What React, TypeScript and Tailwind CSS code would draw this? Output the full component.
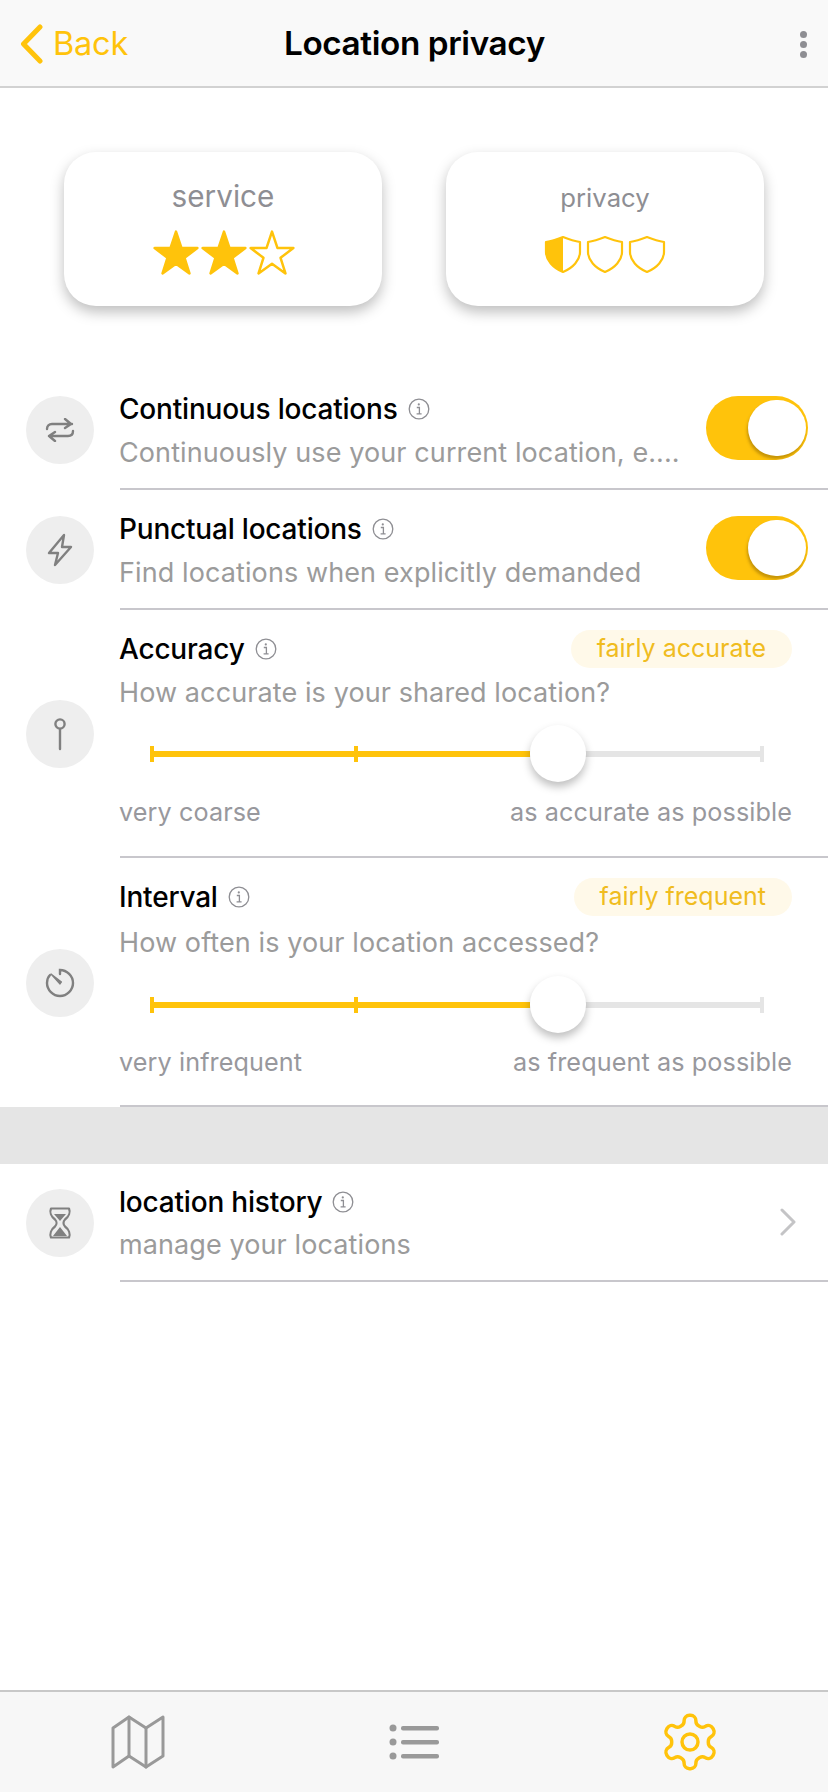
import React from 'react';

const font = "font-['Inter','Noto_Sans',sans-serif]";

const InfoIcon = () => (
    <svg width="22" height="22" viewBox="0 0 22 22" fill="none" stroke="#8e8e93" className="shrink-0">
        <circle cx="11" cy="11" r="9.8" strokeWidth="1.3" />
        <circle cx="10.8" cy="6.4" r="1.1" fill="#8e8e93" stroke="none" />
        <path d="M8.8 9.5h2.6v6.2M8.6 15.8h5" strokeWidth="1.3" />
    </svg>
);

const IconCircle = ({ children }: { children: React.ReactNode }) => (
    <div className="w-[68px] h-[68px] rounded-full bg-[#eeeeee] flex items-center justify-center shrink-0">
        {children}
    </div>
);

const Toggle = () => (
    <div className="w-[102px] h-[64px] rounded-full bg-[#ffc30b] flex items-center justify-end pr-[2px] overflow-hidden shrink-0">
        <div className="w-[58px] h-[56px] rounded-full bg-white shadow-[-1px_3px_3px_rgba(90,60,0,0.35)]"></div>
    </div>
);

const Title = ({ text }: { text: string }) => (
    <div className="flex items-center gap-[10px] h-[38px] -ml-[1px]">
        <span className="text-[28px] font-medium text-black tracking-[-0.2px]">{text}</span>
        <InfoIcon />
    </div>
);

const Subtitle = ({ text }: { text: string }) => (
    <div className="h-[38px] -ml-[1px] flex items-center text-[27px] text-[#9b9b9b] whitespace-nowrap tracking-[0.1px]">{text}</div>
);

const Star = ({ filled }: { filled: boolean }) => (
    <svg width="48" height="46" viewBox="0 0 46 44">
        <path
            d="M23 2.5l5.2 15.6h15.3L31.2 27.6l4.7 14.9L23 33.2l-12.9 9.3 4.7-14.9L2.5 18.1h15.3z"
            fill={filled ? '#ffc30b' : 'none'}
            stroke="#ffc30b"
            strokeWidth="2.4"
            strokeLinejoin="round"
        />
    </svg>
);

const Shield = ({ half }: { half?: boolean }) => (
    <svg width="38" height="38" viewBox="0 0 38 38">
        {half && <path d="M19 2L2 7v10c0 9 7 16 17 20z" fill="#ffc30b" />}
        <path
            d="M19 2c5 2 10 4 17 5v10c0 8-7 16-17 20C9 33 2 25 2 17V7c7-1 12-3 17-5z"
            fill="none"
            stroke="#ffc30b"
            strokeWidth="2.2"
            strokeLinejoin="round"
        />
    </svg>
);

const Slider = ({ className }: { className: string }) => (
    <div className={`relative h-[58px] ml-[30px] mr-[64px] flex items-center ${className}`}>
        <div className="w-full h-[6px] bg-[#e5e5e5]"></div>
        <div className="absolute left-0 top-[26px] w-[380px] h-[6px] bg-[#ffc30b]"></div>
        <div className="absolute left-0 top-[21px] w-[4px] h-[16px] bg-[#ffc30b]"></div>
        <div className="absolute left-[204px] top-[21px] w-[4px] h-[16px] bg-[#ffc30b]"></div>
        <div className="absolute right-0 top-[21px] w-[4px] h-[16px] bg-[#e5e5e5]"></div>
        <div className="absolute left-[380px] top-0 w-[56px] h-[57px] rounded-full bg-white shadow-[0_5px_9px_rgba(0,0,0,0.25)]"></div>
    </div>
);

const SliderRow = ({
    title,
    badge,
    sub,
    low,
    high,
    icon,
    rowHeight,
    subGap,
    sliderGap,
    labelGap,
}: {
    title: string;
    badge: string;
    sub: string;
    low: string;
    high: string;
    icon: React.ReactNode;
    rowHeight: string;
    subGap: string;
    sliderGap: string;
    labelGap: string;
}) => (
    <div className="flex items-center">
        <div className="ml-[26px] mr-[26px]">
            <IconCircle>{icon}</IconCircle>
        </div>
        <div className={`flex-1 pt-[20px] border-b-2 border-[#c8c7cc] ${rowHeight}`}>
            <div className="flex items-center justify-between pr-[36px]">
                <Title text={title} />
                <span className="h-[38px] px-[26px] rounded-full bg-[#fff9e9] text-[#f0bc20] text-[25px] flex items-center">{badge}</span>
            </div>
            <div className={subGap}>
                <Subtitle text={sub} />
            </div>
            <Slider className={sliderGap} />
            <div className={`flex justify-between -ml-[1px] pr-[36px] text-[25.2px] text-[#98989d] tracking-[0.1px] ${labelGap}`}>
                <span>{low}</span>
                <span>{high}</span>
            </div>
        </div>
    </div>
);

const ToggleRow = ({ title, sub, icon }: { title: string; sub: string; icon: React.ReactNode }) => (
    <div className="flex items-center">
        <div className="ml-[26px] mr-[26px]">
            <IconCircle>{icon}</IconCircle>
        </div>
        <div className="flex-1 h-[120px] pr-[20px] border-b-2 border-[#c8c7cc] flex items-start justify-between">
            <div className="pt-[20px]">
                <Title text={title} />
                <div className="mt-[6px]">
                    <Subtitle text={sub} />
                </div>
            </div>
            <div className="pt-[26px]">
                <Toggle />
            </div>
        </div>
    </div>
);

export default function App() {
    return (
        <div className={`${font} min-h-screen w-full bg-white flex flex-col`}>
            {/* Header */}
            <header className="relative h-[88px] pt-[2px] bg-[#f9f9f9] border-b-2 border-[#d2d2d2] flex items-center justify-between shrink-0">
                <div className="flex items-center pl-[20px] gap-[9px]">
                    <svg width="24" height="40" viewBox="0 0 24 40" fill="none" stroke="#ffc30b" strokeWidth="5" strokeLinecap="round" strokeLinejoin="round">
                        <path d="M20 3L3.5 20 20 37" />
                    </svg>
                    <span className="text-[32.5px] text-[#ffc30b] tracking-[-0.2px]">Back</span>
                </div>
                <span className="absolute left-[284px] text-[33.3px] font-semibold text-black tracking-[-0.4px]">Location privacy</span>
                <div className="flex flex-col gap-[3px] pr-[21px]">
                    <div className="w-[7px] h-[7px] rounded-full bg-[#8e8e93]"></div>
                    <div className="w-[7px] h-[7px] rounded-full bg-[#8e8e93]"></div>
                    <div className="w-[7px] h-[7px] rounded-full bg-[#8e8e93]"></div>
                </div>
            </header>

            {/* Rating cards */}
            <div className="flex justify-between px-[64px] mt-[64px] mb-[64px]">
                <div className="w-[318px] h-[154px] rounded-[32px] bg-white shadow-[0_6px_14px_rgba(0,0,0,0.26)] flex flex-col items-center pt-[24px]">
                    <span className="text-[29.7px] leading-[40px] text-[#8e8e93]">service</span>
                    <div className="flex items-center mt-[13px] ml-[1px]">
                        <Star filled />
                        <Star filled />
                        <Star filled={false} />
                    </div>
                </div>
                <div className="w-[318px] h-[154px] rounded-[32px] bg-white shadow-[0_6px_14px_rgba(0,0,0,0.26)] flex flex-col items-center pt-[26px]">
                    <span className="text-[25.7px] leading-[40px] text-[#8e8e93]">privacy</span>
                    <div className="flex items-center gap-[4px] mt-[17px]">
                        <Shield half />
                        <Shield />
                        <Shield />
                    </div>
                </div>
            </div>

            {/* Rows */}
            <ToggleRow
                title="Continuous locations"
                sub="Continuously use your current location, e...."
                icon={
                    <svg width="30" height="24" viewBox="0 0 30 24" fill="none" stroke="#808080" strokeWidth="2.4" strokeLinecap="round" strokeLinejoin="round">
                        <path d="M2 11c0-3 2-5 5-5h20M20 1l6 5-6 4" />
                        <path d="M28 13c0 3-2 5-5 5H4M10 14l-6 4 6 5" />
                    </svg>
                }
            />
            <ToggleRow
                title="Punctual locations"
                sub="Find locations when explicitly demanded"
                icon={
                    <svg width="26" height="34" viewBox="0 0 26 34" fill="none" stroke="#808080" strokeWidth="2.4" strokeLinejoin="round">
                        <path d="M17 2L2 20h9l-3 12 16-18h-9z" />
                    </svg>
                }
            />
            <SliderRow
                title="Accuracy"
                badge="fairly accurate"
                sub="How accurate is your shared location?"
                low="very coarse"
                high="as accurate as possible"
                rowHeight="h-[248px]"
                subGap="mt-[6px]"
                sliderGap="mt-[13px]"
                labelGap="mt-[11px]"
                icon={
                    <svg width="14" height="34" viewBox="0 0 14 34" fill="none" stroke="#808080" strokeWidth="2.4" strokeLinecap="round">
                        <circle cx="7" cy="7" r="4.6" />
                        <path d="M7 12v20" />
                    </svg>
                }
            />
            <SliderRow
                title="Interval"
                badge="fairly frequent"
                sub="How often is your location accessed?"
                low="very infrequent"
                high="as frequent as possible"
                rowHeight="h-[249px]"
                subGap="mt-[8px]"
                sliderGap="mt-[14px]"
                labelGap="mt-[10px]"
                icon={
                    <svg width="30" height="30" viewBox="0 0 30 30" fill="none" stroke="#808080" strokeWidth="2.4" strokeLinecap="round">
                        <path d="M15 6V2c7 0 13 6 13 13s-6 13-13 13S2 22 2 15c0-3 1-6 3-8" />
                        <path d="M6 6l9 10 1.5-2z" fill="#808080" strokeWidth="1.2" strokeLinejoin="round" />
                    </svg>
                }
            />

            <div className="h-[57px] bg-[#e5e5e5] shrink-0"></div>

            {/* History */}
            <div className="flex items-center">
                <div className="ml-[26px] mr-[26px]">
                    <IconCircle>
                        <svg width="24" height="32" viewBox="0 0 24 32" fill="none" stroke="#808080" strokeWidth="2.2" strokeLinejoin="round">
                            <path d="M3 1.500h18c1.500 3.500 0 8-4 11-2 2-2 5 0 7 4 3 5.500 7.500 4 11H3c-1.500-3.500 0-8 4-11 2-2 2-5 0-7-4-3-5.500-7.500-4-11z" />
                            <path d="M6 7h12l-6 7zM12 20l7 9H5z" fill="#808080" stroke="none" />
                        </svg>
                    </IconCircle>
                </div>
                <div className="flex-1 h-[118px] pt-[19px] pr-[32px] border-b-2 border-[#c8c7cc] flex items-start justify-between">
                    <div>
                        <Title text="location history" />
                        <div className="mt-[5px]">
                            <Subtitle text="manage your locations" />
                        </div>
                    </div>
                    <svg width="16" height="28" viewBox="0 0 16 28" fill="none" stroke="#c4c4c6" strokeWidth="3" strokeLinecap="round" strokeLinejoin="round" className="mt-[25px]">
                        <path d="M2 2l12 12L2 26" />
                    </svg>
                </div>
            </div>

            <div className="flex-1"></div>

            {/* Bottom tab bar */}
            <nav className="h-[102px] bg-[#f7f7f7] border-t-2 border-[#c8c8c8] flex items-center shrink-0">
                <div className="w-[276px] flex justify-center">
                    <svg width="54" height="54" viewBox="0 0 54 54" fill="none" stroke="#999999" strokeWidth="3" strokeLinejoin="round" strokeLinecap="round">
                        <path d="M2 13L18 2l17 11L52 2v39L35 52 18 41 2 52z" />
                        <path d="M18 2v39M35 13v39" />
                    </svg>
                </div>
                <div className="w-[276px] flex justify-center">
                    <svg width="50" height="36" viewBox="0 0 50 36" fill="#999999">
                        <circle cx="4" cy="4" r="3.500" />
                        <circle cx="4" cy="18" r="3.500" />
                        <circle cx="4" cy="32" r="3.500" />
                        <rect x="12" y="2" width="38" height="4.500" rx="2" />
                        <rect x="12" y="16" width="38" height="4.500" rx="2" />
                        <rect x="12" y="30" width="38" height="4.500" rx="2" />
                    </svg>
                </div>
                <div className="w-[276px] flex justify-center">
                    <svg width="64" height="64" viewBox="0 0 24 24" fill="none" stroke="#ffc30b" strokeWidth="1.3" strokeLinecap="round" strokeLinejoin="round">
                        <path d="M12.220 2h-.44a2 2 0 0 0-2 2v.18a2 2 0 0 1-1 1.730l-.430.250a2 2 0 0 1-2 0l-.150-.080a2 2 0 0 0-2.730.730l-.220.380a2 2 0 0 0 .730 2.730l.150.100a2 2 0 0 1 1 1.720v.510a2 2 0 0 1-1 1.740l-.150.090a2 2 0 0 0-.730 2.730l.220.380a2 2 0 0 0 2.730.730l.150-.080a2 2 0 0 1 2 0l.430.250a2 2 0 0 1 1 1.730V20a2 2 0 0 0 2 2h.440a2 2 0 0 0 2-2v-.180a2 2 0 0 1 1-1.730l.430-.250a2 2 0 0 1 2 0l.150.080a2 2 0 0 0 2.730-.730l.220-.390a2 2 0 0 0-.730-2.730l-.150-.080a2 2 0 0 1-1-1.740v-.500a2 2 0 0 1 1-1.740l.150-.090a2 2 0 0 0 .730-2.730l-.220-.380a2 2 0 0 0-2.730-.730l-.150.080a2 2 0 0 1-2 0l-.430-.250a2 2 0 0 1-1-1.730V4a2 2 0 0 0-2-2z" />
                        <circle cx="12" cy="12" r="3" />
                    </svg>
                </div>
            </nav>
        </div>
    );
}
